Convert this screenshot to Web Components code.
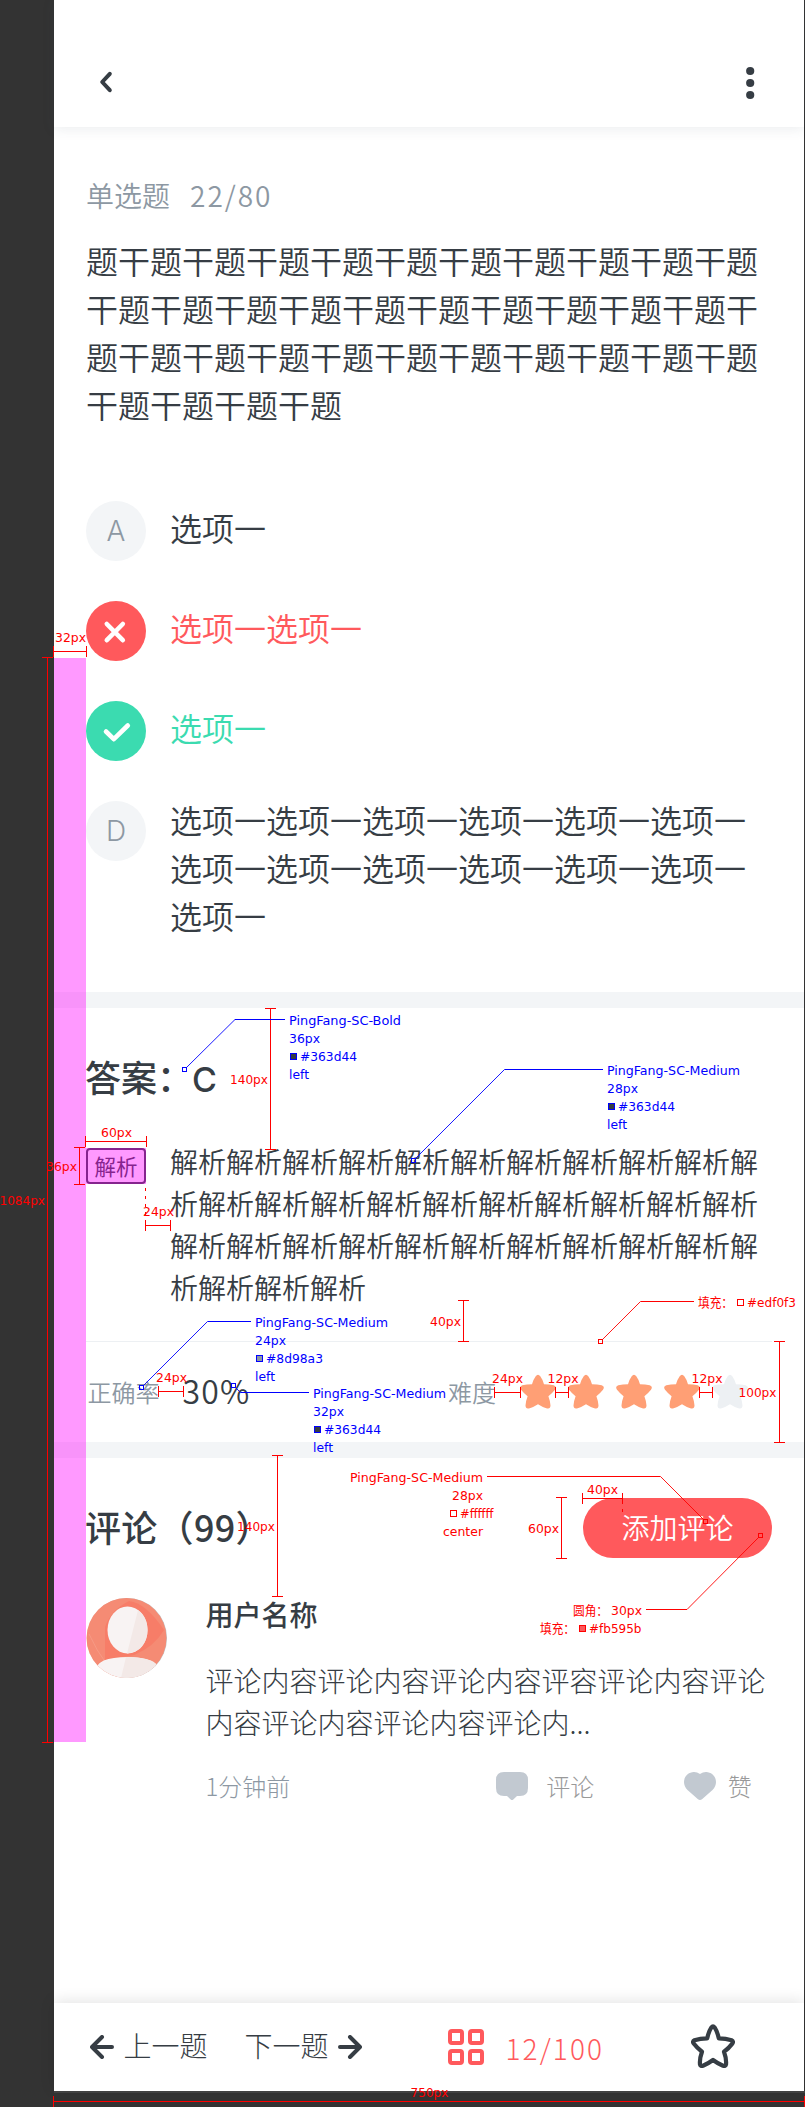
<!DOCTYPE html>
<html lang="zh-CN">
<head>
<meta charset="utf-8">
<title>单选题</title>
<style>
html,body{margin:0;background:#333}
body{width:805px;height:2107px;overflow:hidden;font-family:"Noto Sans CJK SC","Noto Sans",sans-serif;font-weight:350;color:#363d44}
</style>
</head>
<body>
<spec-sheet></spec-sheet>
<script>
function define(name, markup, setup) {
  const tpl = document.createElement('template');
  tpl.innerHTML = markup;
  customElements.define(name, class extends HTMLElement {
    connectedCallback() {
      if (this.shadowRoot) return;
      this.attachShadow({ mode: 'open' }).append(tpl.content.cloneNode(true));
      if (setup) setup(this, this.shadowRoot);
    }
  });
}

define('top-bar', `<style>
:host{display:flex;box-sizing:border-box;height:127px;padding:68px 49px 0 46px;justify-content:space-between;align-items:flex-start;background:#fff;box-shadow:0 2px 12px rgba(54,80,100,.1)}
svg{display:block;overflow:visible}</style>
<svg width="14" height="28" viewBox="0 0 14 28"><path d="M9.8 5.8 2.2 14l7.6 8.2" fill="none" stroke="#363d44" stroke-width="4" stroke-linecap="round" stroke-linejoin="round"/></svg>
<svg width="8" height="32" viewBox="0 0 8 32" fill="#363d44"><circle cx="3.2" cy="3" r="4.1"/><circle cx="3.2" cy="15" r="4.1"/><circle cx="3.2" cy="27" r="4.1"/></svg>`);

define('question-stem', `<style>
:host{display:block;box-sizing:border-box;height:374px;padding:47px 32px 0}
.kind{font-size:28px;line-height:42px;color:#8d98a3;display:flex;gap:20px;margin-bottom:20px}
.count{letter-spacing:2px}
.stem{font-size:32px;line-height:48px}
</style><div class="kind"><slot name="kind"></slot><span class="count"><slot name="count"></slot></span></div><div class="stem"><slot></slot></div>`);

define('answer-option', `<style>
:host{display:flex;gap:24px;height:60px;margin-bottom:40px;font-size:32px;line-height:48px}
:host([state=long]){height:auto;margin:0}
.mark{flex:none;width:60px;height:60px;border-radius:50%;background:#f3f5f7;color:#8d98a3;display:flex;align-items:center;justify-content:center;font:350 28px Inter,"Noto Sans CJK SC",sans-serif}
.text{padding-top:2px}
:host([state=long]) .text{margin-top:-8.5px}
:host([state=wrong]){color:#ff595c}:host([state=wrong]) .mark{background:#ff595c}
:host([state=right]){color:#3bdbb0}:host([state=right]) .mark{background:#3bdbb0}
svg{fill:none;stroke:#fff;stroke-width:4.6;stroke-linecap:round;stroke-linejoin:round}
</style><div class="mark"></div><div class="text"><slot></slot></div>`, (el, root) => {
  const icons = {
    wrong: '<svg width="60" height="60"><path d="M20.8 23 36.8 39.2M36.8 23 20.8 39.2"/></svg>',
    right: '<svg width="60" height="60"><path d="M20 30.5 27.8 38.2 41.8 24.5"/></svg>'
  };
  root.querySelector('.mark').innerHTML = icons[el.getAttribute('state')] || el.getAttribute('letter');
});

define('option-list', `<style>:host{display:block;box-sizing:border-box;height:491px;padding:0 46px 0 32px}</style><slot></slot>`);
define('section-gap', `<style>:host{display:block;height:16px;background:#f3f5f7}</style>`);

define('answer-panel', `<style>
:host{display:block;box-sizing:border-box;height:333px;padding:41px 32px 0}
h2{margin:0 0 0 -1px;height:54px;font-size:36px;line-height:54px;font-weight:500}
h2 span{font-family:Inter;font-weight:500;font-size:34px;margin-left:-1px}
.row{display:flex;gap:24px;margin-top:43px}
.tag{flex:none;box-sizing:border-box;width:60px;height:36px;border:2px solid #363d44;border-radius:4px;margin-top:2px;font-size:21.5px;line-height:32px;text-align:center;font-weight:400;position:relative}
.tag::after{content:"";position:absolute;inset:-2px;background:rgba(255,0,255,.4)}
.body{width:589px;font-size:28px;line-height:42px;margin-top:-6px}
</style><h2><slot name="title"></slot><span><slot name="answer"></slot></span></h2><div class="row"><div class="tag"><slot name="tag"></slot></div><div class="body"><slot></slot></div></div>`);

define('star-rating', `<style>:host{display:flex;gap:12px}svg{display:block;fill:#ff9f75}svg.off{fill:#edf0f3}</style>`, (el, root) => {
  const n = +el.getAttribute('value');
  for (let i = 0; i < 5; i++) root.innerHTML += `<svg class="${i < n ? '' : 'off'}" width="36" height="36" viewBox="0 0 36 36"><path d="M15.7 2.2Q18-.8 20.3 2.2 22.8 5.6 24 10.2 29.3 10.2 33.7 11.3 37.2 12.6 35 15.7 32.2 19.2 28.4 22.2 30.3 27.2 30.5 31.6 30.4 35.4 26.3 34.2 22 32.8 18 30.2 14 32.8 9.7 34.2 5.6 35.4 5.5 31.6 5.7 27.2 7.6 22.2 3.8 19.2 1 15.7-1.2 12.6 2.3 11.3 6.7 10.2 12 10.2 13.2 5.6 15.7 2.2Z"/></svg>`;
});

define('stat-bar', `<style>
:host{display:flex;align-items:center;box-sizing:border-box;height:101px;margin:0 32px;padding:2px 24px 0 1.5px;border-top:1px solid #edf0f3;font-size:24px;color:#8d98a3}
.val{color:#363d44;font-size:32px;line-height:48px;margin:-7px auto 0 23px;letter-spacing:1.2px}
star-rating{margin:-2px 0 0 24px}
.l{line-height:36px;margin-top:-2px}
</style><span class="l"><slot name="label"></slot></span><span class="val"><slot name="value"></slot></span><span class="l"><slot name="difficulty"></slot></span><star-rating value="4"></star-rating>`);

define('comment-header', `<style>
:host{display:flex;box-sizing:border-box;height:140px;padding:40px 32px 0;justify-content:space-between}
h2{margin:0 0 0 -1px;font-size:36px;line-height:54px;font-weight:500;padding-top:1px;letter-spacing:.3px}
button{width:189px;height:60px;border:0;border-radius:30px;background:#ff595c;color:#fff;font:350 28px/58px "Noto Sans CJK SC",sans-serif;padding:0 0 2px}
</style><h2><slot></slot></h2><button><slot name="action"></slot></button>`);

define('user-avatar', `<style>:host{display:block;width:81px;height:80px}</style>
<svg width="81" height="80" viewBox="0 0 81 80"><defs><clipPath id="c"><circle cx="40.5" cy="40" r="40"/></clipPath></defs>
<circle cx="41" cy="40" r="40" fill="#bfc3c5"/>
<g clip-path="url(#c)"><path fill="#f58b74" d="M0 0h81v80H0z"/><path fill="#f77d68" d="M43 3Q60 5 78 32 68 49 48 57L19 62V29Q25 12 43 3Z"/><path d="M3 36Q10 52 22 68" stroke="#f69a85" fill="none"/>
<ellipse cx="41.5" cy="32" rx="20" ry="23.5" fill="#f8f3f3"/><path d="M52 12C67 22 64 51 46 54.5L41 55.5Z" fill="#f3e9e7"/>
<path d="M11 68Q16 61 28 60 41 58 55 60 67 62 71 67L71 80H11Z" fill="#f8f3f3"/><path d="M40 59Q65 59 71 67V80H35Z" fill="#f3e9e7"/></g></svg>`);

define('comment-item', `<style>
:host{display:flex;gap:38.5px;padding:0 32px;height:405px}
.main{flex:1}
.name{font-size:28px;line-height:42px;font-weight:500;margin-top:-5px}
.text{width:562px;font-size:28px;line-height:42px;font-weight:300;margin-top:24px}
.meta{display:flex;align-items:center;height:36px;margin-top:25px;font-size:24px;line-height:36px;font-weight:300;color:#8d98a3}
.time,.act{margin-top:-1px}
.act{color:#999}
svg{display:block;fill:#c2c9d1}
.b{margin-left:206px}.h{margin-left:90px}
.b+.act{margin-left:18px}.h+.act{margin-left:11.5px}
</style><user-avatar></user-avatar><div class="main"><div class="name"><slot name="name"></slot></div><div class="text"><slot></slot></div>
<div class="meta"><span class="time"><slot name="time"></slot></span>
<svg class="b" width="32" height="28"><path d="M8 0H24Q32 0 32 8V16Q32 24 24 24H21L17.3 27.4Q16 28.6 14.7 27.4L11 24H8Q0 24 0 16V8Q0 0 8 0Z"/></svg><span class="act"><slot name="reply"></slot></span>
<svg class="h" width="32" height="28"><path d="M16 2C23-3 32 2 32 10Q32 14.5 28.5 18L18.3 27Q16 29 13.7 27L3.5 18Q0 14.5 0 10C0 2 9-3 16 2Z"/></svg><span class="act"><slot name="like"></slot></span></div></div>`);

define('bottom-bar', `<style>
:host{display:flex;align-items:center;box-sizing:border-box;height:88px;padding:0 69px 0 36px;background:#fff;box-shadow:0 -2px 14px rgba(0,0,0,.11);font-size:28px;font-weight:300}
svg{display:block;fill:none;stroke:#363d44;stroke-width:4;stroke-linecap:round;stroke-linejoin:round;margin-top:-1px}
.t{line-height:42px;margin-top:-4px}
.p{margin-left:9.5px}.n{margin-left:37px}.a{margin-left:9px}
.g{stroke:#ff595c;margin-left:86px;stroke-linejoin:miter}
.c{color:#ff595c;margin:1px auto 0 22px;letter-spacing:2.1px;line-height:42px}
.s{stroke-width:4.2;margin-top:-2px}
</style>
<svg width="24" height="24"><path d="M22 12H3M12 2 2 12 12 22"/></svg><span class="t p"><slot name="prev"></slot></span>
<span class="t n"><slot name="next"></slot></span><svg class="a" width="24" height="24"><path d="M2 12H21M12 2 22 12 12 22"/></svg>
<svg class="g" width="36" height="36"><rect x="2" y="2" width="12" height="12" rx="2"/><rect x="22" y="2" width="12" height="12" rx="2"/><rect x="2" y="22" width="12" height="12" rx="2"/><rect x="22" y="22" width="12" height="12" rx="2"/></svg>
<span class="c"><slot name="progress"></slot></span>
<svg class="s" width="44" height="44"><path d="M20.4 3.4Q22 1.3 23.6 3.4 26.3 7.5 27.8 14.4 35 14.4 40.5 16.2 43 17.4 41.3 19.6 37.8 24.2 33 27.8 35.6 35 35 40.4 34.5 42.4 32 41.7 26.5 39.4 22 36 17.5 39.4 12 41.7 9.5 42.4 9 40.4 8.4 35 11 27.8 6.2 24.2 2.7 19.6 1 17.4 3.5 16.2 9 14.4 16.2 14.4 17.7 7.5 20.4 3.4Z"/></svg>`);

define('quiz-screen', `<style>:host{display:flex;flex-direction:column;width:750px;height:2091px;background:#fff}</style><slot></slot>`);

define('measure-layer', `<style>:host{position:absolute;left:0;top:0;width:805px;height:2107px;pointer-events:none}
svg{display:block}text{font-family:"DejaVu Sans Condensed","DejaVu Sans","Noto Sans CJK SC",sans-serif;font-weight:400;font-size:12.6px;font-stretch:condensed}
.r{stroke:#f00;fill:none}.b{stroke:#00f;fill:none}.d{stroke-width:.9}</style><svg width="805" height="2107"></svg>`, (el, root) => {
  const R = '#f00', B = '#00f';
  let out = '<rect x="54" y="658" width="32" height="1084" fill="#f0f" fill-opacity=".4"/>';
  const text = (s, x, y, w, c) => { out += `<text x="${x}" y="${y}" textLength="${w}" lengthAdjust="spacingAndGlyphs" fill="${c}">${s}</text>`; };
  const hspan = (x1, x2, y, s, tx, ty, w = 31) => {
    out += `<path class="r" d="M${x1} ${y}H${x2}M${x1} ${y - 5.5}v11M${x2} ${y - 5.5}v11"/>`;
    text(s, tx, ty, w, R);
  };
  const vspan = (y1, y2, x, s, tx, ty, w = 31) => {
    out += `<path class="r" d="M${x} ${y1}V${y2}M${x - 5.5} ${y1}h11M${x - 5.5} ${y2}h11"/>`;
    text(s, tx, ty, w, R);
  };
  const leader = (k, far, elbow, y, nx, ny) => {
    const dx = Math.sign(elbow - nx), dy = Math.sign(y - ny);
    out += `<path class="${k}" d="M${far} ${y}H${elbow}"/><path class="${k} d" d="M${elbow} ${y}L${nx + dx * 2} ${ny + dy * 2}"/><rect class="${k}" x="${nx - 2}" y="${ny - 2}" width="4" height="4"/>`;
  };
  const swatch = (x, y, fill, c) => { out += `<rect x="${x + .5}" y="${y + .5}" width="6" height="6" fill="${fill}" stroke="${c}"/>`; };
  const fontNote = (x, y, name, w, size, color) => {
    text(name, x, y, w, B); text(size, x, y + 18, 31, B);
    swatch(x + 1, y + 28, color, B); text(color, x + 11, y + 36, 57, B); text('left', x, y + 54, 20, B);
  };
  hspan(53.5, 86.5, 651.5, '32px', 55, 642);
  vspan(657.5, 1742.5, 47.5, '1084px', -.5, 1205, 45.5);
  vspan(1008.5, 1149.5, 270.5, '140px', 230, 1084, 38);
  hspan(85.5, 146.5, 1141.5, '60px', 101, 1137);
  vspan(1147.5, 1184.5, 79.5, '36px', 46, 1171);
  out += '<path class="r" stroke-dasharray="3 5" d="M145.5 1188v28"/>';
  hspan(145.5, 170.5, 1225.5, '24px', 143, 1216);
  vspan(1300.5, 1341.5, 463.5, '40px', 430, 1326);
  hspan(158.5, 183.5, 1391.5, '24px', 156, 1382);
  hspan(494.5, 520.5, 1392.5, '24px', 492, 1383);
  hspan(555.5, 568.5, 1392.5, '12px', 547.5, 1383);
  hspan(699.5, 712.5, 1392.5, '12px', 691.5, 1383);
  vspan(1341.5, 1442.5, 779.5, '100px', 738.5, 1397, 38);
  vspan(1455.5, 1596.5, 277.5, '140px', 237, 1531, 38);
  vspan(1497.5, 1558.5, 561.5, '60px', 528, 1533);
  hspan(582.5, 622.5, 1498.5, '40px', 587, 1494);
  out += '<path class="r" d="M622.5 1509v3"/>';
  hspan(53.5, 804.5, 2101.5, '750px', 410.5, 2097, 38);
  leader('b', 285, 235, 1019.5, 184.5, 1069.5);
  fontNote(289, 1025, 'PingFang-SC-Bold', 112, '36px', '#363d44');
  leader('b', 603, 504.5, 1069.5, 413.5, 1160.5);
  fontNote(607, 1075, 'PingFang-SC-Medium', 133, '28px', '#363d44');
  leader('b', 251, 207.5, 1321.5, 141.5, 1387.5);
  fontNote(255, 1327, 'PingFang-SC-Medium', 133, '24px', '#8d98a3');
  leader('b', 309, 240.5, 1392.5, 233.5, 1385.5);
  fontNote(313, 1398, 'PingFang-SC-Medium', 133, '32px', '#363d44');
  leader('r', 694, 640.5, 1301.5, 600.5, 1341.5);
  text('填充：', 698, 1307, 35, R); swatch(737, 1299, '#fff', R); text('#edf0f3', 747, 1307, 49, R);
  leader('r', 487, 660.5, 1476.5, 705.5, 1521.5);
  text('PingFang-SC-Medium', 350, 1482, 133, R); text('28px', 452, 1500, 31, R);
  swatch(450, 1510, '#fff', R); text('#ffffff', 460, 1518, 33.5, R); text('center', 443, 1536, 40, R);
  leader('r', 646, 687, 1609.5, 760.5, 1535.5);
  text('圆角：', 573, 1615, 35, R); text('30px', 611, 1615, 31, R);
  text('填充：', 540, 1633, 35, R); swatch(579, 1625, '#fb595b', R); text('#fb595b', 589, 1633, 52.5, R);
  root.querySelector('svg').innerHTML = out;
});

define('spec-sheet', `<style>
:host{display:block;position:relative;box-sizing:border-box;width:805px;height:2107px;padding-left:54px;overflow:hidden;background:#333}
.edge{width:751px;height:2px;background:#444}
</style>
<quiz-screen>
<top-bar></top-bar>
<question-stem><span slot="kind">单选题</span><span slot="count">22/80</span>题干题干题干题干题干题干题干题干题干题干题干题干题干题干题干题干题干题干题干题干题干题干题干题干题干题干题干题干题干题干题干题干题干题干题干题</question-stem>
<option-list>
<answer-option letter="A">选项一</answer-option>
<answer-option state="wrong">选项一选项一</answer-option>
<answer-option state="right">选项一</answer-option>
<answer-option state="long" letter="D">选项一选项一选项一选项一选项一选项一选项一选项一选项一选项一选项一选项一选项一</answer-option>
</option-list>
<section-gap></section-gap>
<answer-panel><span slot="title">答案：</span><span slot="answer">C</span><span slot="tag">解析</span>解析解析解析解析解析解析解析解析解析解析解析解析解析解析解析解析解析解析解析解析解析解析解析解析解析解析解析解析解析解析解析解析解析解析解析</answer-panel>
<stat-bar><span slot="label">正确率</span><span slot="value">30%</span><span slot="difficulty">难度</span></stat-bar>
<section-gap></section-gap>
<comment-header>评论（99）<span slot="action">添加评论</span></comment-header>
<comment-item><span slot="name">用户名称</span>评论内容评论内容评论内容评容评论内容评论内容评论内容评论内容评论内...<span slot="time">1分钟前</span><span slot="reply">评论</span><span slot="like">赞</span></comment-item>
<bottom-bar><span slot="prev">上一题</span><span slot="next">下一题</span><span slot="progress">12/100</span></bottom-bar>
</quiz-screen>
<div class="edge"></div>
<measure-layer></measure-layer>`);
</script>
</body>
</html>
